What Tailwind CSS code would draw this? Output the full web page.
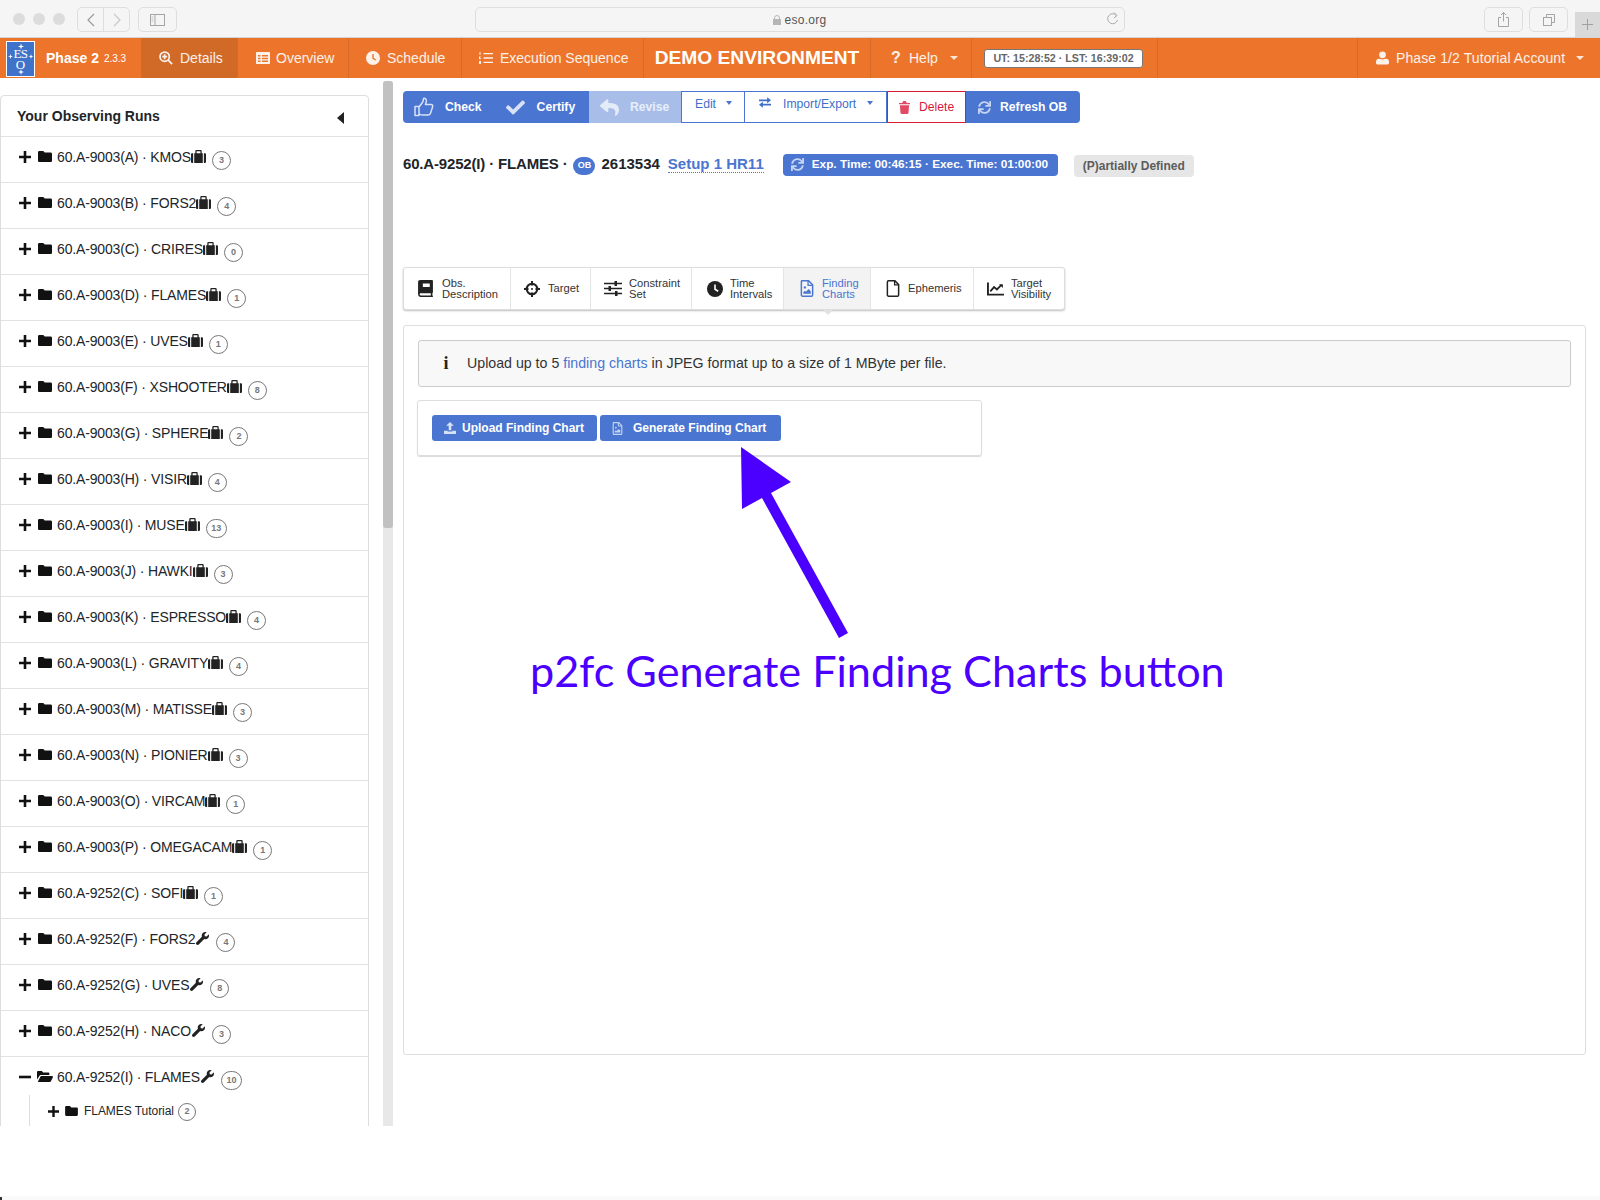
<!DOCTYPE html>
<html lang="en">
<head>
    <meta charset="UTF-8">
    <title>Phase 2 - eso.org</title>
    <script src="https://cdn.jsdelivr.net/npm/@tailwindcss/browser@4"></script>
</head>
<body class="relative w-[1600px] h-[1200px] overflow-hidden bg-white font-['Liberation_Sans',Arial,sans-serif] text-[#212529]">

    <!-- Icon sheet -->
    <svg class="hidden">
        <symbol id="i-plus" viewBox="0 0 12 12"><path d="M4.7 0h2.6v4.7H12v2.6H7.3V12H4.7V7.3H0V4.7h4.700z" fill="currentColor"/></symbol>
        <symbol id="i-minus" viewBox="0 0 12 12"><rect y="4.700" width="12" height="2.600" fill="currentColor"/></symbol>
        <symbol id="i-folder" viewBox="0 0 14 11"><path d="M1.300 0h4l1.400 1.600h6c.7 0 1.300.6 1.300 1.300v6.800c0 .7-.6 1.300-1.300 1.300H1.300C.6 11 0 10.400 0 9.700V1.300C0 .6.600 0 1.300 0z" fill="currentColor"/></symbol>
        <symbol id="i-folder-open" viewBox="0 0 16 11"><path d="M0 8.500V1.200C0 .5.500 0 1.200 0h3.600l1.400 1.500h5c.7 0 1.200.5 1.200 1.200V4H4.200C3.300 4 2.600 4.500 2.200 5.200zM.8 11l2.500-5.200c.2-.4.600-.7 1.100-.7h10.800c.5 0 .9.600.7 1.100l-2 4.100c-.2.400-.6.700-1.100.7z" fill="currentColor"/></symbol>
        <symbol id="i-suitcase" viewBox="0 0 14 12"><path d="M0 4.200C0 3.500.5 3 1.200 3H2v9h-.8C.5 12 0 11.500 0 10.800zM3 3h1V1.200C4 .5 4.500 0 5.200 0h3.600C9.500 0 10 .5 10 1.200V3h1v9H3zm2.200-1.800V3h3.600V1.200zM12 3h.8c.7 0 1.200.5 1.200 1.200v6.600c0 .7-.5 1.200-1.200 1.200H12z" fill="currentColor" fill-rule="evenodd"/></symbol>
        <symbol id="i-wrench" viewBox="0 0 512 512"><path d="M507.730 109.100c-2.240-9.030-13.540-12.090-20.120-5.510l-74.360 74.360-67.880-11.310-11.310-67.880 74.360-74.360c6.620-6.620 3.430-17.900-5.660-20.160-47.380-11.740-99.550.91-136.580 37.930-39.640 39.640-50.550 97.100-34.050 147.200L18.740 402.760c-24.990 24.990-24.990 65.510 0 90.500 24.990 24.990 65.510 24.990 90.500 0l213.210-213.210c50.120 16.710 107.470 5.680 147.370-34.220 37.070-37.070 49.700-89.320 37.910-136.730z" fill="currentColor"/></symbol>
        <symbol id="i-check" viewBox="0 0 512 512"><path d="M173.898 439.404l-166.400-166.400c-9.997-9.997-9.997-26.206 0-36.204l36.203-36.204c9.997-9.998 26.207-9.998 36.204 0L192 312.690 432.095 72.596c9.997-9.997 26.207-9.997 36.204 0l36.203 36.204c9.997 9.997 9.997 26.206 0 36.204l-294.400 294.401c-9.998 9.997-26.207 9.997-36.204-.001z" fill="currentColor"/></symbol>
        <symbol id="i-reply" viewBox="0 0 512 512"><path d="M8.309 189.836L184.313 37.851C199.719 24.546 224 35.347 224 56.015v80.053c160.629 1.839 288 34.032 288 186.258 0 61.441-39.581 122.309-83.333 154.132-13.653 9.931-33.111-2.533-28.077-18.631 45.344-145.012-21.507-183.510-176.590-185.742V360c0 20.700-24.300 31.453-39.687 18.164l-176.004-152c-11.071-9.562-11.086-26.753 0-36.328z" fill="currentColor"/></symbol>
        <symbol id="i-sync" viewBox="0 0 512 512"><path d="M440.650 12.570l4 82.770A247.160 247.160 0 0 0 255.830 8C134.730 8 33.910 94.920 12.290 209.820A12 12 0 0 0 24.090 224h49.050a12 12 0 0 0 11.670-9.260 175.910 175.910 0 0 1 317-56.940l-101.460-4.860a12 12 0 0 0-12.570 12v47.410a12 12 0 0 0 12 12H500a12 12 0 0 0 12-12V12a12 12 0 0 0-12-12h-47.370a12 12 0 0 0-11.980 12.570zM255.830 432a175.610 175.610 0 0 1-146-77.800l101.800 4.870a12 12 0 0 0 12.570-12v-47.400a12 12 0 0 0-12-12H12a12 12 0 0 0-12 12V500a12 12 0 0 0 12 12h47.350a12 12 0 0 0 12-12.600l-4.150-82.570A247.170 247.170 0 0 0 255.830 504c121.110 0 221.930-86.920 243.550-201.820a12 12 0 0 0-11.800-14.180h-49.050a12 12 0 0 0-11.670 9.260A175.860 175.860 0 0 1 255.830 432z" fill="currentColor"/></symbol>
        <symbol id="i-thumb" viewBox="0 0 20 20"><path d="M1 9.500h4v9H1zM5 10l3.200-4.200c.6-.8 1-1.700 1.100-2.700l.2-1.600c1.600-.6 3 .6 2.900 2.400-.1 1.200-.6 2.400-1 3.600h5.700c1.200 0 1.900 1.100 1.500 2.200l-2 6.200c-.4 1.300-1.400 2.100-2.800 2.100H9c-1.500 0-2.700-.5-4-1" fill="none" stroke="currentColor" stroke-width="1.500" stroke-linejoin="round"/></symbol>
        <symbol id="i-trash" viewBox="0 0 12 14"><path d="M0 2h3.500l.6-1.400C4.300.2 4.600 0 5 0h2c.4 0 .7.200.9.600L8.500 2H12v1.500H0zM1 4.500h10l-.6 8.300c-.1.700-.6 1.200-1.300 1.200H2.900c-.7 0-1.200-.5-1.300-1.200z" fill="currentColor"/></symbol>
        <symbol id="i-exchange" viewBox="0 0 14 12"><path d="M0 2.400h9.500V0L14 3.500 9.500 7V4.600H0zM14 7.400H4.500V5L0 8.500 4.500 12V9.600H14z" fill="currentColor"/></symbol>
        <symbol id="i-clock" viewBox="0 0 16 16"><circle cx="8" cy="8" r="8" fill="currentColor"/><path d="M8 3.500V8.300l3.200 2" fill="none" stroke="var(--hand,#fff)" stroke-width="1.600"/></symbol>
        <symbol id="i-user" viewBox="0 0 14 14"><circle cx="7" cy="3.600" r="3.600" fill="currentColor"/><path d="M0 12.500v-1.700C0 9 1.400 7.800 3 7.800c1 0 2.200.7 4 .7s3-.7 4-.7c1.600 0 3 1.200 3 3v1.700c0 .8-.6 1.500-1.400 1.500H1.400C.6 14 0 13.300 0 12.500z" fill="currentColor"/></symbol>
        <symbol id="i-zoom" viewBox="0 0 16 16"><circle cx="6.500" cy="6.500" r="5.300" fill="none" stroke="currentColor" stroke-width="2"/><path d="M10.500 10.500L15 15M6.500 3.700v5.600M3.700 6.500h5.600" fill="none" stroke="currentColor" stroke-width="2"/></symbol>
        <symbol id="i-table" viewBox="0 0 14 12"><path d="M1 0h12c.6 0 1 .4 1 1v10c0 .6-.4 1-1 1H1c-.6 0-1-.4-1-1V1c0-.6.4-1 1-1zm1 3v1.500h2.500V3zm4 0v1.500h6V3zM2 5.700v1.500h2.500V5.700zm4 0v1.500h6V5.700zM2 8.400v1.500h2.500V8.400zm4 0v1.500h6V8.400z" fill="currentColor" fill-rule="evenodd"/></symbol>
        <symbol id="i-list" viewBox="0 0 14 12"><path d="M4.500 1h9.500v1.300H4.500zM4.500 5.300h9.500v1.400H4.500zM4.500 9.700h9.500V11H4.500zM.5 0h1v3h-1zM0 4.500h2L.6 6.300H2v1H0zM0 9h2v3H0z" fill="currentColor"/></symbol>
        <symbol id="i-book" viewBox="0 0 14 16"><path d="M2 0h11c.6 0 1 .4 1 1v10.500c0 .4-.2.6-.5.8v2.200c.3.100.5.300.5.700v.300c0 .300-.2.500-.5.500H2.500C1.100 16 0 14.900 0 13.500V2C0 .9.900 0 2 0zm2.500 3.300v3.400h6.500V3.300zM2.500 12.500c-.6 0-1 .4-1 1s.4 1 1 1h9.500v-2z" fill="currentColor" fill-rule="evenodd"/></symbol>
        <symbol id="i-target" viewBox="0 0 16 16"><circle cx="8" cy="8" r="5.200" fill="none" stroke="currentColor" stroke-width="2.200"/><path d="M8 0v4.500M8 11.500V16M0 8h4.500M11.500 8H16" fill="none" stroke="currentColor" stroke-width="2"/><circle cx="8" cy="8" r="1" fill="currentColor"/></symbol>
        <symbol id="i-sliders" viewBox="0 0 18 15"><path d="M0 2.500h18M0 7.500h18M0 12.500h18" stroke="currentColor" stroke-width="1.700"/><path d="M10.500 0h2.500v5h-2.500zM4.500 5h2.500v5H4.500zM11 10h2.500v5H11z" fill="currentColor"/></symbol>
        <symbol id="i-file-img" viewBox="0 0 12 16"><path d="M1 .7h6.500L11.300 4.500V14c0 .7-.5 1.300-1.200 1.300H1.900c-.7 0-1.200-.6-1.200-1.300V1.700C.7 1.100 1 .7 1 .7z" fill="none" stroke="currentColor" stroke-width="1.400"/><path d="M7 1v4h4" fill="none" stroke="currentColor" stroke-width="1.200"/><circle cx="4" cy="7" r="1.100" fill="currentColor"/><path d="M2.500 13v-1.500l1.500-1.500 1 1 2.500-2.500 2 2V13z" fill="currentColor"/></symbol>
        <symbol id="i-file" viewBox="0 0 12 16"><path d="M1.800.8h6L11.300 4.300V14c0 .7-.5 1.200-1.200 1.200H1.800C1.200 15.200.7 14.700.7 14V2C.7 1.300 1.200.8 1.800.8z" fill="none" stroke="currentColor" stroke-width="1.400"/><path d="M7.500 1v3.500H11" fill="none" stroke="currentColor" stroke-width="1.200"/></symbol>
        <symbol id="i-chart" viewBox="0 0 18 14"><path d="M1 0v13h17" fill="none" stroke="currentColor" stroke-width="2"/><path d="M3.500 9.500L7.500 5l3 2.500L15 3" fill="none" stroke="currentColor" stroke-width="1.900"/><path d="M12.800 2h4v4z" fill="currentColor"/></symbol>
        <symbol id="i-upload" viewBox="0 0 12 12"><path d="M6 0l3.800 3.800H7.300v4.500H4.700V3.800H2.200zM0 8.700h3.700v.9h4.600v-.9H12V12H0z" fill="currentColor"/></symbol>
    </svg>

    <!-- Safari toolbar -->
    <div class="h-[38px] bg-[#f5f5f5] border-b border-[#d4d4d4] flex items-start pt-[7px] relative">
        <div class="flex items-center gap-2 pl-[13px] pt-[6px] w-[77px]">
            <span class="w-3 h-3 rounded-full bg-[#dcdcdc]"></span>
            <span class="w-3 h-3 rounded-full bg-[#dcdcdc]"></span>
            <span class="w-3 h-3 rounded-full bg-[#dcdcdc]"></span>
        </div>
        <div class="flex h-[25px] w-[53px] border border-[#dedede] rounded-[5px]">
            <span class="flex-1 flex items-center justify-center border-r border-[#dedede]"><svg class="w-2 h-3.5" viewBox="0 0 8 14"><path d="M7 1L1 7l6 6" fill="none" stroke="#9a9a9a" stroke-width="1.200"/></svg></span>
            <span class="flex-1 flex items-center justify-center"><svg class="w-2 h-3.5" viewBox="0 0 8 14"><path d="M1 1l6 6-6 6" fill="none" stroke="#c8c8c8" stroke-width="1.200"/></svg></span>
        </div>
        <div class="ml-2 flex h-[25px] w-[39px] border border-[#dedede] rounded-[5px] items-center justify-center">
            <svg class="w-[15px] h-3" viewBox="0 0 15 12"><rect x=".5" y=".5" width="14" height="11" fill="none" stroke="#a5a5a5"/><path d="M5 0v12" stroke="#a5a5a5"/><path d="M1.500 3h2M1.500 5h2M1.500 7h2" stroke="#c5c5c5"/></svg>
        </div>
        <div class="ml-[298px] w-[650px] h-[25px] border border-[#dedede] rounded-[5px] flex items-center justify-center relative text-[12px] text-[#555] tracking-[0.3px]">
            <svg class="w-2 h-[10px] mr-[3px]" viewBox="0 0 8 10"><path d="M1.500 4.500V3a2.500 2.500 0 015 0v1.500" fill="none" stroke="#b5b5b5"/><rect y="4" width="8" height="6" fill="#b5b5b5"/></svg>
            eso.org
            <svg class="absolute right-[5px] top-[4px] w-[13px] h-[14px]" viewBox="0 0 13 14"><path d="M10.500 3.500A5 5 0 1011.500 8" fill="none" stroke="#aaa"/><path d="M8 .5l3 3-3 2.500" fill="none" stroke="#aaa"/></svg>
        </div>
        <div class="ml-[359px] w-[39px] h-[25px] border border-[#dedede] rounded-[5px] flex items-center justify-center">
            <svg class="w-[11px] h-[15px]" viewBox="0 0 11 15"><path d="M3 5.500H.5v9h10v-9H8M5.500 9.500V.7M3 3l2.500-2.500L8 3" fill="none" stroke="#a5a5a5"/></svg>
        </div>
        <div class="ml-[6px] w-[39px] h-[25px] border border-[#dedede] rounded-[5px] flex items-center justify-center">
            <svg class="w-3 h-3" viewBox="0 0 12 12"><rect x=".5" y="3.500" width="8" height="8" fill="none" stroke="#a5a5a5"/><path d="M3.500 3V.5h8v8H9" fill="none" stroke="#a5a5a5"/></svg>
        </div>
        <div class="absolute right-0 top-3 w-[25px] h-[25px] bg-[#d9d9d9] flex items-center justify-center">
            <svg class="w-[11px] h-[11px]" viewBox="0 0 11 11"><path d="M5.500 0v11M0 5.500h11" stroke="#a0a0a0"/></svg>
        </div>
    </div>

    <!-- ESO navbar -->
    <nav class="h-[40px] bg-[#ec752b] flex items-stretch text-white text-[14px]">
        <div class="w-[141px] flex items-center pl-[6px]">
            <div class="relative w-[29px] h-[36px] mt-[1px] bg-[#3f72c9] border border-white flex flex-col items-center justify-center text-white font-['Liberation_Serif',serif] text-[13px] leading-[11px]">
                <svg class="absolute left-0 top-0" width="27" height="34" viewBox="0 0 27 34">
                    <path d="M14 1.500l.7 2.300 2.300.7-2.300.7-.7 2.300-.7-2.300-2.300-.7 2.300-.7zM3.500 12l.6 1.900 1.900.6-1.900.6-.6 1.900-.6-1.900-1.900-.6 1.900-.6zM24 12l.6 1.900 1.900.6-1.900.6-.6 1.900-.6-1.900-1.900-.6 1.900-.6zM14 27l.7 2.300 2.300.7-2.300.7-.7 2.300-.7-2.300-2.300-.7 2.300-.7z" fill="#fff"/>
                </svg>
                <span class="tracking-[-0.5px]">ES</span>
                <span>O</span>
            </div>
            <span class="ml-[11px] font-bold">Phase 2</span>
            <span class="ml-[5px] text-[10px]">2.3.3</span>
        </div>
        <a class="w-[97px] bg-[#d16a27] border-r border-[#d96a26] flex items-center pl-[18px] gap-[7px] text-white/90"><svg class="w-[14px] h-[14px]"><use href="#i-zoom"/></svg>Details</a>
        <a class="w-[111px] border-r border-[#d96a26] flex items-center pl-[18px] gap-[6px] text-white/90"><svg class="w-[14px] h-[12px]"><use href="#i-table"/></svg>Overview</a>
        <a class="w-[113px] border-r border-[#d96a26] flex items-center pl-[17px] gap-[7px] text-white/90 [--hand:#ec752b]"><svg class="w-[14px] h-[14px]"><use href="#i-clock"/></svg>Schedule</a>
        <a class="w-[182px] border-r border-[#d96a26] flex items-center pl-[17px] gap-[7px] text-white/90"><svg class="w-[14px] h-[12px]"><use href="#i-list"/></svg>Execution Sequence</a>
        <div class="w-[227px] border-r border-[#d96a26] flex items-center justify-center font-bold text-[19.200px]">DEMO ENVIRONMENT</div>
        <a class="w-[101px] border-r border-[#d96a26] flex items-center pl-[19px] text-white/90"><span class="font-bold text-[16px] w-[19px] pl-[1px]">?</span>Help<span class="ml-[12px] border-x-[4px] border-x-transparent border-t-[4px] border-t-white/80"></span></a>
        <div class="w-[186px] border-r border-[#d96a26] flex items-center pl-[12px]">
            <span class="w-[159px] h-[19px] pt-[1px] bg-white border border-[#777] rounded-[3px] text-[#666] text-[10.700px] font-bold flex items-center justify-center">UT: 15:28:52 · LST: 16:39:02</span>
        </div>
        <div class="w-[200px] border-r border-[#d96a26]"></div>
        <a class="flex-1 flex items-center pl-[18px] text-white/90 tracking-[0.1px]"><svg class="w-[13px] h-[14px] mr-[7px]"><use href="#i-user"/></svg>Phase 1/2 Tutorial Account<span class="ml-[11px] border-x-[4px] border-x-transparent border-t-[4px] border-t-white/80"></span></a>
    </nav>

    <!-- Page body, cut off at the bottom like the reference -->
    <div class="h-[1048px] flex overflow-hidden">
        <aside class="w-[369px] pt-[17px] shrink-0">
            <div class="border border-[#ddd] rounded-t-[4px] bg-white">
                <div class="h-[41px] flex items-center justify-between border-b border-[#e2e2e2] pl-[16px] pr-[24px]">
                    <span class="font-bold text-[14px]">Your Observing Runs</span>
                    <span class="border-y-[6px] border-y-transparent border-r-[7px] border-r-[#222] mt-[3px]"></span>
                </div>
                <div id="runs"></div>
                <div class="relative ml-[28px] pl-[18px] border-l border-[#ddd] h-[60px] -mt-[8px]">
                    <div class="flex items-center h-[32px] text-[12px]">
                        <svg class="w-[11px] h-[11px] text-[#111]"><use href="#i-plus"/></svg>
                        <svg class="w-[13px] h-[10px] ml-[6px] text-[#111]"><use href="#i-folder"/></svg>
                        <span class="ml-[6px] tracking-[-0.05px]">FLAMES Tutorial</span>
                        <span class="ml-[4px] mt-[2px] w-[18px] h-[18px] rounded-full border border-[#777] text-[#777] font-bold text-[9px] flex items-center justify-center">2</span>
                    </div>
                </div>
            </div>
        </aside>

        <!-- Scrollbar -->
        <div class="ml-[14px] mt-[3px] w-[10px] bg-[#e8e8e8] shrink-0 rounded-t-[3px]">
            <div class="h-[447px] bg-[#c1c1c1] rounded-[3px]"></div>
        </div>

        <main class="ml-[10px] w-[1183px] pt-[13px] relative">
            <!-- Toolbar -->
            <div class="flex h-[32px] text-[12.200px] font-bold text-white">
                <div class="w-[186px] bg-[#4a75d1] rounded-l-[4px] flex items-center pl-[11px]">
                    <svg class="w-[20px] h-[20px] text-[#d7e2f6]"><use href="#i-thumb"/></svg>
                    <span class="ml-[11px]">Check</span>
                    <svg class="w-[19px] h-[19px] ml-[24px] text-[#d7e2f6]"><use href="#i-check"/></svg>
                    <span class="ml-[12px]">Certify</span>
                </div>
                <div class="w-[92px] bg-[#a8bee9] flex items-center pl-[11px]">
                    <svg class="w-[19px] h-[19px] text-[#e4ebf8]"><use href="#i-reply"/></svg>
                    <span class="ml-[11px] text-[#e8eefa]">Revise</span>
                </div>
                <div class="w-[64px] border border-[#4a75d1] bg-white text-[#3f6fc9] font-normal flex items-start pt-[3px] pl-[13px]">Edit<span class="ml-[10px] mt-[6px] border-x-[3.500px] border-x-transparent border-t-[4px] border-t-[#4a75d1]"></span></div>
                <div class="w-[142px] border-y border-r border-[#4a75d1] bg-white text-[#3f6fc9] font-normal flex items-start pt-[3px] pl-[14px]"><svg class="w-[12px] h-[11px] mt-[2px] mr-[12px]"><use href="#i-exchange"/></svg>Import/Export<span class="ml-[11px] mt-[6px] border-x-[3.500px] border-x-transparent border-t-[4px] border-t-[#4a75d1]"></span></div>
                <div class="w-[79px] border border-[#dc1a3a] bg-white text-[#d81b3c] font-normal flex items-center pl-[11px]"><svg class="w-[11px] h-[13px] text-[#e04a63] mr-[9px]"><use href="#i-trash"/></svg>Delete</div>
                <div class="w-[114px] bg-[#4a75d1] rounded-r-[4px] flex items-center pl-[12px]"><svg class="w-[13px] h-[13px] text-[#c5d4f0] mr-[9px]"><use href="#i-sync"/></svg>Refresh OB</div>
            </div>

            <!-- OB title -->
            <div class="flex items-center h-[27px] mt-[28px] text-[15px] font-bold">
                <span class="tracking-[-0.17px]">60.A-9252(I) · FLAMES ·</span>
                <span class="ml-[6px] mt-[3px] w-[22px] h-[18px] rounded-[9px] bg-[#4a75d1] text-white text-[9px] flex items-center justify-center">OB</span>
                <span class="ml-[6px]">2613534</span>
                <span class="ml-[8px] text-[#4a75d1] border-b border-dotted border-[#4a75d1] leading-[16px]">Setup 1 HR11</span>
                <span class="ml-[19px] w-[275px] h-[22px] bg-[#4a75d1] rounded-[4px] text-white text-[11.800px] flex items-center pl-[8px]"><svg class="w-[13px] h-[13px] text-[#c5d4f0] mr-[8px]"><use href="#i-sync"/></svg>Exp. Time: 00:46:15 · Exec. Time: 01:00:00</span>
                <span class="ml-[16px] mt-[2px] w-[120px] h-[22px] bg-[#e6e6e6] rounded-[4px] text-[#5c5c5c] text-[12px] flex items-center justify-center">(P)artially Defined</span>
            </div>

            <!-- Tabs -->
            <div class="mt-[89px] w-[662px] h-[43px] bg-white border border-[#ddd] rounded-[3px] shadow-[0_1px_2px_rgba(0,0,0,0.25)] flex text-[11.200px] leading-[11px] text-[#333]">
                <div class="w-[107px] border-r border-[#e5e5e5] flex items-center pl-[14px] gap-[9px]"><svg class="w-[15px] h-[17px] text-[#222]"><use href="#i-book"/></svg><span>Obs.<br>Description</span></div>
                <div class="w-[80px] border-r border-[#e5e5e5] flex items-center pl-[13px] gap-[8px]"><svg class="w-[16px] h-[16px] text-[#222]"><use href="#i-target"/></svg><span>Target</span></div>
                <div class="w-[101px] border-r border-[#e5e5e5] flex items-center pl-[13px] gap-[7px]"><svg class="w-[18px] h-[15px] text-[#222]"><use href="#i-sliders"/></svg><span>Constraint<br>Set</span></div>
                <div class="w-[92px] border-r border-[#e5e5e5] flex items-center pl-[15px] gap-[7px]"><svg class="w-[16px] h-[16px] text-[#222]"><use href="#i-clock"/></svg><span>Time<br>Intervals</span></div>
                <div class="relative w-[87px] bg-[#f3f3f3] border-r border-[#e5e5e5] flex items-center pl-[16px] gap-[8px] text-[#4a75d1]"><svg class="w-[14px] h-[17px]"><use href="#i-file-img"/></svg><span>Finding<br>Charts</span>
                    <span class="absolute left-[39px] -bottom-[6px] border-x-[5px] border-x-transparent border-t-[5px] border-t-[#e2e2e2]"></span>
                </div>
                <div class="w-[103px] border-r border-[#e5e5e5] flex items-center pl-[15px] gap-[8px]"><svg class="w-[14px] h-[17px] text-[#222]"><use href="#i-file"/></svg><span>Ephemeris</span></div>
                <div class="flex-1 flex items-center pl-[13px] gap-[7px]"><svg class="w-[17px] h-[14px] text-[#222]"><use href="#i-chart"/></svg><span>Target<br>Visibility</span></div>
            </div>

            <!-- Finding charts panel -->
            <div class="mt-[15px] w-[1183px] h-[730px] border border-[#ddd] rounded-[3px] p-[14px]">
                <div class="h-[47px] bg-[#f8f8f8] border border-[#ccc] rounded-[3px] flex items-center text-[14.200px] text-[#333]">
                    <span class="w-[48px] pl-[6px] text-center font-['Liberation_Serif',serif] font-bold text-[18px] text-[#222]">i</span>
                    <span>Upload up to 5 <a class="text-[#4a75d1]">finding charts</a> in JPEG format up to a size of 1 MByte per file.</span>
                </div>
                <div class="mt-[13px] -ml-[1px] w-[565px] h-[56px] border border-[#ddd] rounded-[3px] shadow-[0_1px_1px_rgba(0,0,0,0.15)] flex items-start gap-[3px] pt-[14px] pl-[14px] text-[12px] font-bold text-white">
                    <button class="w-[165px] h-[26px] bg-[#4a75d1] rounded-[3px] flex items-center pl-[12px]"><svg class="w-[12px] h-[12px] text-[#d7e2f6] mr-[6px]"><use href="#i-upload"/></svg>Upload Finding Chart</button>
                    <button class="w-[181px] h-[26px] bg-[#4a75d1] rounded-[3px] flex items-center pl-[12px]"><svg class="w-[11px] h-[13px] text-[#c5d4f0] mr-[10px]"><use href="#i-file-img"/></svg>Generate Finding Chart</button>
                </div>
            </div>
        </main>
    </div>

    <!-- Annotation over the screenshot -->
    <svg class="absolute left-0 top-0 pointer-events-none" width="1600" height="1200">
        <polygon points="741,447 791,482 771,493 848,633 839,638 762,498 742,509" fill="#4b00ff"/>
    </svg>
    <div class="absolute left-[530px] top-[640px] text-[#4b00ff] text-[43.200px] leading-[60px] whitespace-nowrap font-['Lato',sans-serif]">p2fc Generate Finding Charts button</div>

    <!-- Window edge at the very bottom -->
    <div class="absolute left-0 bottom-0 w-full h-[4px] bg-[#fafafa]"></div>
    <div class="absolute left-0 bottom-0 w-[2px] h-[3px] bg-[#333]"></div>

    <script>
        // observing runs for the tree on the left
        const runs = [
            ["60.A-9003(A) · KMOS", "suitcase", 3], ["60.A-9003(B) · FORS2", "suitcase", 4],
            ["60.A-9003(C) · CRIRES", "suitcase", 0], ["60.A-9003(D) · FLAMES", "suitcase", 1],
            ["60.A-9003(E) · UVES", "suitcase", 1], ["60.A-9003(F) · XSHOOTER", "suitcase", 8],
            ["60.A-9003(G) · SPHERE", "suitcase", 2], ["60.A-9003(H) · VISIR", "suitcase", 4],
            ["60.A-9003(I) · MUSE", "suitcase", 13], ["60.A-9003(J) · HAWKI", "suitcase", 3],
            ["60.A-9003(K) · ESPRESSO", "suitcase", 4], ["60.A-9003(L) · GRAVITY", "suitcase", 4],
            ["60.A-9003(M) · MATISSE", "suitcase", 3], ["60.A-9003(N) · PIONIER", "suitcase", 3],
            ["60.A-9003(O) · VIRCAM", "suitcase", 1], ["60.A-9003(P) · OMEGACAM", "suitcase", 1],
            ["60.A-9252(C) · SOFI", "suitcase", 1], ["60.A-9252(F) · FORS2", "wrench", 4],
            ["60.A-9252(G) · UVES", "wrench", 8], ["60.A-9252(H) · NACO", "wrench", 3],
            ["60.A-9252(I) · FLAMES", "wrench", 10],
        ];
        document.getElementById("runs").innerHTML = runs.map((run, i) => {
            const open = i === runs.length - 1;
            return `<div class="h-[46px] ${open ? "" : "border-b border-[#e2e2e2]"} flex items-start pt-[12px] pl-[18px] text-[14px] leading-[16px]">
                <svg class="w-[12px] h-[12px] mt-[2px] text-[#111]"><use href="#i-${open ? "minus" : "plus"}"/></svg>
                <svg class="${open ? "w-[16px] ml-[6px]" : "w-[14px] ml-[7px]"} h-[11px] mt-[2px] text-[#111]"><use href="#i-${open ? "folder-open" : "folder"}"/></svg>
                <span class="${open ? "ml-[4px]" : "ml-[5px]"} tracking-[-0.16px]">${run[0]}</span>
                <svg class="w-[15px] h-[13px] mt-[1px] text-[#222]"><use href="#i-${run[1]}"/></svg>
                <span class="ml-[6px] mt-[2px] ${run[2] > 9 ? "w-[21px]" : "w-[19px]"} h-[19px] rounded-full border border-[#777] text-[#777] font-bold text-[9px] leading-none flex items-center justify-center">${run[2]}</span>
            </div>`;
        }).join("");
    </script>
</body>
</html>
